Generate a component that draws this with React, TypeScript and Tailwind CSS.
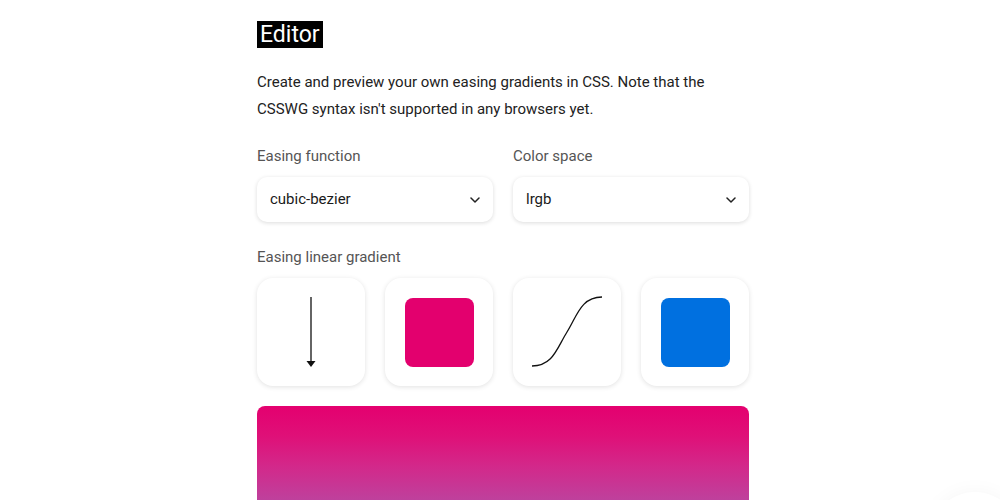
import React from "react";

const ChevronDown = () => (
  <svg width="10" height="6" viewBox="0 0 10 6" fill="none">
    <path d="M1 1l4 4 4-4" stroke="#222" strokeWidth="1.5" strokeLinecap="round" strokeLinejoin="round" />
  </svg>
);

const SelectBox: React.FC<{ label: string; value: string }> = ({ label, value }) => (
  <div className="flex flex-col">
    <p className="text-[15px] leading-[24px] text-[#555]">{label}</p>
    <div className="mt-[9px] h-[45px] rounded-[10px] bg-white shadow-[0_1px_4px_rgba(0,0,0,0.14)] flex items-center justify-between pl-[13px] pr-[13px]">
      <span className="text-[15px] text-[#1a1a1a]">{value}</span>
      <ChevronDown />
    </div>
  </div>
);

const Tile: React.FC<{ children: React.ReactNode }> = ({ children }) => (
  <div className="h-[108px] rounded-[16px] bg-white shadow-[0_1px_5px_rgba(0,0,0,0.12)] flex items-center justify-center">
    {children}
  </div>
);

export default function App() {
  return (
    <div
      className="h-screen bg-white overflow-hidden relative"
      style={{ fontFamily: "Roboto, 'Noto Sans', sans-serif" }}
    >
      <div className="mx-auto w-[498px] pl-[6px] pt-[21px]">
        <h1 className="w-fit bg-black text-white text-[23px] leading-[27px] px-[3px]">Editor</h1>

        <p className="mt-[21px] text-[15px] leading-[27px] text-[#222]">
          Create and preview your own easing gradients in CSS. Note that the CSSWG syntax isn't supported in any browsers yet.
        </p>

        <div className="mt-[21px] grid grid-cols-2 gap-[20px]">
          <SelectBox label="Easing function" value="cubic-bezier" />
          <SelectBox label="Color space" value="lrgb" />
        </div>

        <p className="mt-[23px] text-[15px] leading-[24px] text-[#555]">Easing linear gradient</p>

        <div className="mt-[9px] grid grid-cols-4 gap-[20px]">
          <Tile>
            <svg width="12" height="72" viewBox="0 0 12 72">
              <line x1="6" y1="1" x2="6" y2="66" stroke="#111" strokeWidth="1.3" />
              <path d="M1.5 65h9L6 71z" fill="#111" />
            </svg>
          </Tile>
          <Tile>
            <div className="w-[69px] h-[69px] rounded-[8px] bg-[#e3006e]" />
          </Tile>
          <Tile>
            <svg width="72" height="72" viewBox="0 0 72 72" fill="none">
              <path d="M1 70C22 70 26 52 36 36C46 20 50 1 71 1" stroke="#111" strokeWidth="1.3" />
            </svg>
          </Tile>
          <Tile>
            <div className="w-[69px] h-[69px] rounded-[8px] bg-[#0070e0]" />
          </Tile>
        </div>

        <div className="mt-[20px] h-[300px] rounded-[8px] bg-[linear-gradient(to_bottom,#e4006f_0%,#df1078_10%,#d3288a_20%,#bf409c_31%,#9050b4_45%,#4c62cc_65%,#0070e0_100%)]" />
      </div>

      <div className="absolute left-[930px] top-[492px] w-[90px] h-[90px] rounded-full bg-white shadow-[0_0_20px_rgba(0,0,0,0.04)]" />
    </div>
  );
}
